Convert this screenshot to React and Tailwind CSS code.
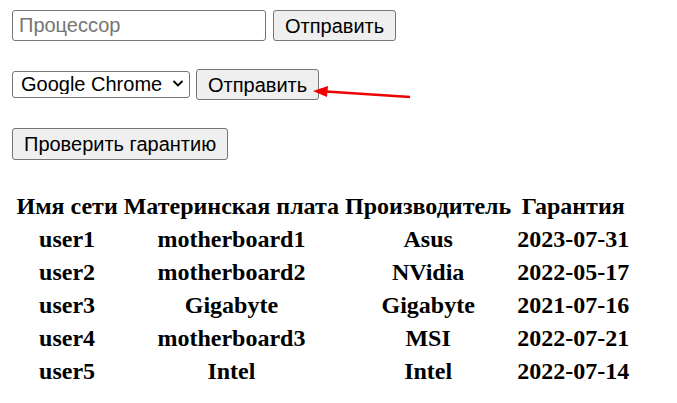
import { useState } from "react"

const rows = [
  { user: "user1", board: "motherboard1", vendor: "Asus", warranty: "2023-07-31" },
  { user: "user2", board: "motherboard2", vendor: "NVidia", warranty: "2022-05-17" },
  { user: "user3", board: "Gigabyte", vendor: "Gigabyte", warranty: "2021-07-16" },
  { user: "user4", board: "motherboard3", vendor: "MSI", warranty: "2022-07-21" },
  { user: "user5", board: "Intel", vendor: "Intel", warranty: "2022-07-14" },
]

function Button({ children, className = "" }) {
  return (
    <button
      className={
        "h-[31px] px-[11px] bg-[#efefef] border border-[#767676] rounded-[3px] text-[20px] leading-none text-black " +
        className
      }
    >
      {children}
    </button>
  )
}

export default function App() {
  const [browser, setBrowser] = useState("chrome")

  return (
    <div className="relative w-[677px] h-[403px] bg-white px-[12px] pt-[10px] font-['Liberation_Sans',Arial,sans-serif] text-black">
      {/* Processor */}
      <div className="flex items-center gap-[7px]">
        <input
          placeholder="Процессор"
          className="w-[254px] h-[31px] border border-[#767676] rounded-[3px] pl-[6px] text-[20px] placeholder:text-[#757575] outline-none"
        />
        <Button>Отправить</Button>
      </div>

      {/* Browser */}
      <div className="flex items-center gap-[6px] mt-[28px]">
        <div className="relative">
          <select
            value={browser}
            onChange={(e) => setBrowser(e.target.value)}
            className="appearance-none w-[178px] h-[27px] border border-[#767676] rounded-[3px] pl-[8px] pr-[24px] text-[20px] leading-none bg-white outline-none"
          >
            <option value="chrome">Google Chrome</option>
            <option value="firefox">Firefox</option>
          </select>
          <svg
            className="absolute right-[6px] top-[8px] pointer-events-none"
            width="12"
            height="9"
            viewBox="0 0 12 9"
          >
            <path d="M1.5 2 L6 6.5 L10.5 2" fill="none" stroke="#000" strokeWidth="1.8" />
          </svg>
        </div>
        <Button className="h-[30px]">Отправить</Button>
      </div>

      {/* Warranty */}
      <div className="mt-[28px]">
        <Button className="h-[32px]">Проверить гарантию</Button>
      </div>

      <table className="mt-[28px] border-separate border-spacing-[3px] font-['Liberation_Serif','Times_New_Roman',serif] text-[24px] leading-[27px] font-bold">
        <thead>
          <tr>
            <th className="px-[1.5px] py-[1.5px]">Имя сети</th>
            <th className="px-[1.5px] py-[1.5px]">Материнская плата</th>
            <th className="px-[1.5px] py-[1.5px]">Производитель</th>
            <th className="px-[1.5px] py-[1.5px]">Гарантия</th>
          </tr>
        </thead>
        <tbody>
          {rows.map((r) => (
            <tr key={r.user}>
              <td className="px-[1.5px] py-[1.5px] text-center">{r.user}</td>
              <td className="px-[1.5px] py-[1.5px] text-center">{r.board}</td>
              <td className="px-[1.5px] py-[1.5px] text-center">{r.vendor}</td>
              <td className="px-[1.5px] py-[1.5px] text-center">{r.warranty}</td>
            </tr>
          ))}
        </tbody>
      </table>

      {/* Annotation arrow */}
      <svg className="absolute left-0 top-0 pointer-events-none" width="677" height="403">
        <line x1="410" y1="97" x2="326" y2="91.5" stroke="#f00000" strokeWidth="2.5" />
        <path d="M313 91 L328 86 L327 97 Z" fill="#f00000" />
      </svg>
    </div>
  )
}
